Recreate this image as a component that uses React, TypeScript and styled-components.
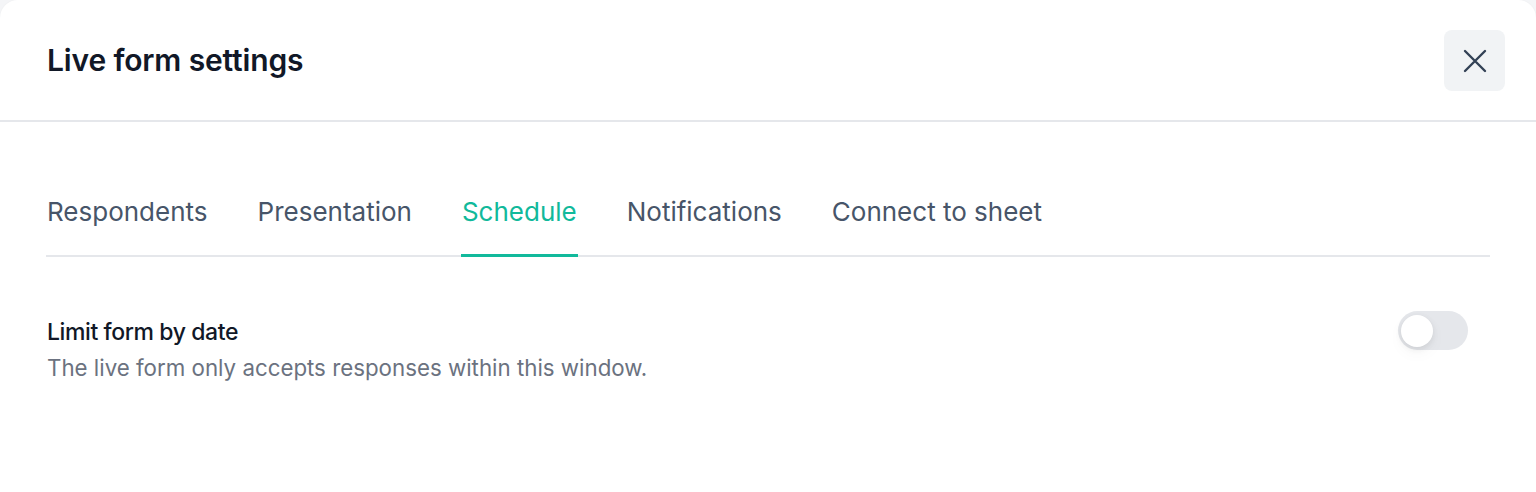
import React, { useState } from "react";
import styled, { createGlobalStyle } from "styled-components";

const Global = createGlobalStyle`
  html, body { margin: 0; padding: 0; background: #f4f5f7; }
  body { font-family: Inter, "Noto Sans", sans-serif; -webkit-font-smoothing: antialiased; }
  * { box-sizing: border-box; }
`;

const Panel = styled.div`
  background: #ffffff;
  border-radius: 18px 18px 0 0;
  min-height: 492px;
  box-shadow: 0 0 2px rgba(0, 0, 0, 0.04);
`;

const Header = styled.header`
  height: 122px;
  display: flex;
  align-items: center;
  justify-content: space-between;
  padding: 0 31px 0 47px;
  border-bottom: 2px solid #e5e7eb;
`;

const Title = styled.h1`
  margin: 0;
  font-size: 30px;
  font-weight: 600;
  color: #111827;
  letter-spacing: -0.15px;
`;

const CloseButton = styled.button`
  width: 61px;
  height: 61px;
  border: none;
  border-radius: 8px;
  background: #f1f3f5;
  display: flex;
  align-items: center;
  justify-content: center;
  padding: 0;
  cursor: pointer;
  margin-top: 1px;
`;

const Body = styled.div`
  padding: 62px 46px 0 46px;
`;

const TabList = styled.div`
  display: flex;
  gap: 48px;
  border-bottom: 2px solid #e5e7eb;
`;

const Tab = styled.button<{ $active?: boolean }>`
  background: none;
  border: none;
  padding: 12px 1px 26px;
  margin-bottom: -2px;
  font-family: inherit;
  font-size: 26px;
  font-weight: 400;
  color: ${(p) => (p.$active ? "#11b99b" : "#475569")};
  border-bottom: 3px solid ${(p) => (p.$active ? "#11b99b" : "transparent")};
  cursor: pointer;
  line-height: 32px;
`;

const Setting = styled.div`
  display: flex;
  justify-content: space-between;
  align-items: flex-start;
  padding: 60px 22px 0 1px;
`;

const SettingText = styled.div`
  display: flex;
  flex-direction: column;
  gap: 7px;
`;

const SettingTitle = styled.div`
  font-size: 23px;
  font-weight: 500;
  color: #111827;
  line-height: 30px;
  letter-spacing: -0.4px;
`;

const SettingDesc = styled.div`
  font-size: 22.3px;
  color: #6b7280;
  line-height: 28px;
`;

const Switch = styled.button<{ $on: boolean }>`
  width: 70px;
  height: 39px;
  border-radius: 999px;
  border: none;
  padding: 3px;
  background: ${(p) => (p.$on ? "#11b99b" : "#e5e7eb")};
  display: flex;
  align-items: center;
  justify-content: ${(p) => (p.$on ? "flex-end" : "flex-start")};
  cursor: pointer;
  margin-top: -6px;
`;

const Knob = styled.span`
  width: 32px;
  height: 32px;
  border-radius: 50%;
  background: #ffffff;
  box-shadow: 0 2px 6px rgba(0, 0, 0, 0.08), 0 6px 16px rgba(0, 0, 0, 0.04);
`;

const tabs = ["Respondents", "Presentation", "Schedule", "Notifications", "Connect to sheet"];

export default function App() {
  const [active, setActive] = useState("Schedule");
  const [on, setOn] = useState(false);
  return (
    <>
      <Global />
      <Panel>
        <Header>
          <Title>Live form settings</Title>
          <CloseButton aria-label="Close">
            <svg width="24" height="24" viewBox="0 0 24 24" fill="none" stroke="#334155" strokeWidth="2.4" strokeLinecap="round">
              <path d="M2 2 L22 22 M22 2 L2 22" />
            </svg>
          </CloseButton>
        </Header>
        <Body>
          <TabList>
            {tabs.map((t) => (
              <Tab key={t} $active={t === active} onClick={() => setActive(t)}>
                {t}
              </Tab>
            ))}
          </TabList>
          <Setting>
            <SettingText>
              <SettingTitle>Limit form by date</SettingTitle>
              <SettingDesc>The live form only accepts responses within this window.</SettingDesc>
            </SettingText>
            <Switch $on={on} onClick={() => setOn(!on)} aria-label="Limit form by date">
              <Knob />
            </Switch>
          </Setting>
        </Body>
      </Panel>
    </>
  );
}
